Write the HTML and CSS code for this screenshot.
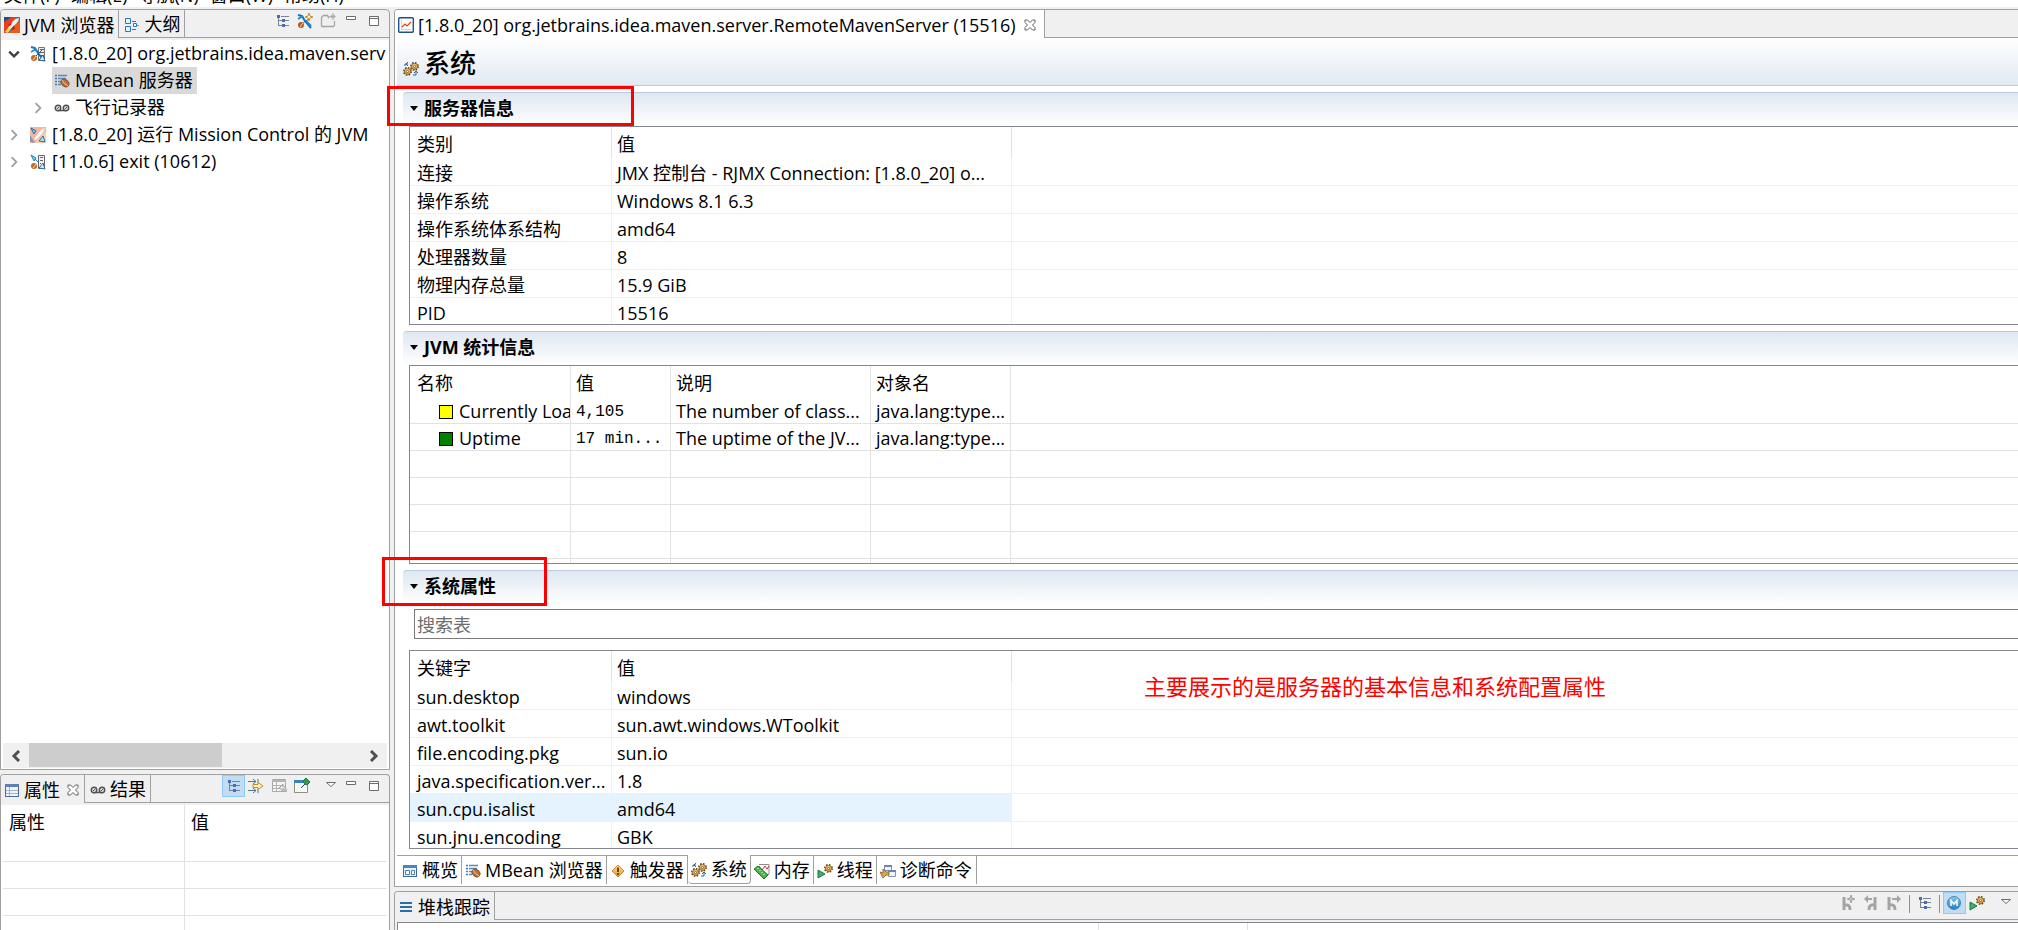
FILE: index.html
```html
<!DOCTYPE html>
<html lang="zh-CN">
<head>
<meta charset="utf-8">
<title>Mission Control</title>
<link rel="stylesheet" href="styles.css">
</head>
<body>
<svg class="sprite" aria-hidden="true">
  <linearGradient id="gold" x1="0" y1="0" x2="0" y2="1"><stop offset="0" stop-color="#ffe08a"/><stop offset="1" stop-color="#e09a28"/></linearGradient>
  <linearGradient id="sky" x1="0" y1="0" x2="0" y2="1"><stop offset="0" stop-color="#8cc8f0"/><stop offset="1" stop-color="#1f7fc4"/></linearGradient>
  <symbol id="rocket" viewBox="0 0 16 16">
    <rect width="16" height="16" rx="1" fill="#2a6cb0"/>
    <path d="M0 4L9 0H13L3 16H0z" fill="#e8401c"/><path d="M5 16L16 2V16z" fill="#e85a1c"/><path d="M1 15L7 7L9 9L4 16z" fill="#ffd23c"/><path d="M0 0h7L0 5z" fill="#1d4f8e"/>
    <path d="M4 11L9 4Q12 1 15 1Q15 4 12 7L6 12z" fill="#f2eee8"/><path d="M4 8L8 6L6 9zM7 13L10 9L11 12z" fill="#b81c10"/>
  </symbol>
  <symbol id="outline" viewBox="0 0 16 16">
    <path d="M1.500 1.500h5v5h-5zM1.500 9.500h5v5h-5z" fill="#e4f2fc" stroke="#2a78b4"/>
    <path d="M8 4.500h4M8 12.500h4" stroke="#2a78b4"/><path d="M9.500 6.500h3v3h-3z" fill="#fff" stroke="#2a78b4"/><path d="M13 8.500h2" stroke="#58a0d0"/>
  </symbol>
  <symbol id="tree" viewBox="0 0 16 16">
    <path d="M4.500 3v10M5 7.500h3M5 12.500h3M7 3.500h8M11 7.500h4M11 12.500h4" stroke="#788496" fill="none"/>
    <path d="M3 2h3v3h-3zM8 6h3v3h-3zM8 11h3v3h-3z" fill="#4670b0"/>
  </symbol>
  <symbol id="plug" viewBox="0 0 16 16">
    <path d="M8.500 1.500h6v13h-6z" fill="#eceef0" stroke="#70777e"/><path d="M10 3.500h4M10 6.500h4M10 9.500h4" stroke="#5c646c"/>
    <path d="M1 1l4 1 3 5 6 8" stroke="#1b70b4" stroke-width="2" fill="none"/><path d="M1 6l5-3M3 1l4 5" stroke="#2088c8" stroke-width="1.500"/>
    <circle cx="4" cy="12" r="3" fill="#c26a24"/><path d="M3 14l3-4" stroke="#ffd8a0"/><path d="M6 10L13 3M9 14l4-5 2 6z" stroke="#2a5f94" fill="#d8ecfa"/>
  </symbol>
  <symbol id="plugx" viewBox="0 0 16 16">
    <path d="M8.500 1.500h6v13h-6z" fill="#f4f4f4" stroke="#5c646c"/><path d="M10 3.500h3M10 6.500h3M10 9.500h1" stroke="#5c646c"/>
    <path d="M1 1l5 3-2 3zM5 5l3 3" stroke="#1b80c0" fill="#90d0f0"/><circle cx="4" cy="12" r="3" fill="#c26a24"/><path d="M3 14l3-4" stroke="#ffd8a0"/>
    <path d="M9 14l4-5 2 6z" stroke="#2a6fa8" fill="#d8ecfa"/>
  </symbol>
  <symbol id="plugr" viewBox="0 0 16 16">
    <rect width="16" height="16" fill="#f0b8a4"/><path d="M5 16L16 4V16z" fill="#f6d0a8"/><path d="M4 12L10 4Q12 2 15 1L12 7L6 13z" fill="#faf4f0"/>
    <path d="M1 1l5 3-2 3z" stroke="#1b70b4" fill="#90c8f0"/><path d="M9 14l4-5 2 6z" stroke="#2a6fa8" fill="#b8dcf4"/><path d="M0 15V8l5 8z" fill="#8898b4"/>
  </symbol>
  <symbol id="newconn" viewBox="0 0 16 16">
    <path d="M1 2l4 1 3 5 6 7" stroke="#1b70b4" stroke-width="2" fill="none"/><path d="M1 6l5-3M9 8l5 5" stroke="#2088c8" stroke-width="2"/>
    <circle cx="4" cy="12" r="3" fill="#b85a20"/><path d="M3 14l3-4" stroke="#ffd8a0"/><path d="M6 10L13 5" stroke="#3a6f98"/><path d="M12 0l1 3 3 1-3 1-1 3-1-3-3-1 3-1z" fill="#fff0b0" stroke="#c89030"/>
  </symbol>
  <symbol id="newfolder" viewBox="0 0 16 16">
    <path d="M1.500 13.500v-9l2-2h4l1 2h1M14.500 8v4l-1 1.500h-12" fill="none" stroke="#a4a4a4" stroke-width="1.300"/><path d="M13 0v7M9.500 3.500h6M11 2l4 3M11 5l4-3" stroke="#a8a8a8"/>
  </symbol>
  <symbol id="mbean" viewBox="0 0 16 16">
    <path d="M1 2.500h2M1 5.500h2M1 8.500h2M1 11.500h2" stroke="#3a78b8" stroke-width="1.500"/><path d="M4 2.500h9M4 5.500h8M4 8.500h3M4 11.500h3" stroke="#5c88b8" stroke-width="1.500"/>
    <ellipse cx="11" cy="10" rx="4.500" ry="3.500" transform="rotate(40 11 10)" fill="#b8703c" stroke="#7a4420" stroke-width=".7"/><path d="M8 7q2 4 6 6" stroke="#f4d0a0" fill="none"/>
  </symbol>
  <symbol id="tape" viewBox="0 0 16 16">
    <path d="M4 10.500h8" stroke="#505050" stroke-width="1.500"/><circle cx="4" cy="8" r="2.700" fill="#e4e4e4" stroke="#505050" stroke-width="1.500"/><circle cx="12" cy="8" r="2.700" fill="#e4e4e4" stroke="#505050" stroke-width="1.500"/><path d="M3 9l2-2M11 9l2-2" stroke="#505050"/>
  </symbol>
  <symbol id="chart" viewBox="0 0 16 16">
    <rect x=".7" y=".7" width="14.600" height="14.600" rx="1" fill="#fff" stroke="#1c4f8c" stroke-width="1.400"/><path d="M3.500 2.500v10h10" stroke="#88a8c8" fill="none" stroke-dasharray="1 1"/><path d="M4 10l3-3 2 2 4-4" stroke="#e0401c" fill="none" stroke-width="1.200"/>
  </symbol>
  <symbol id="gear" viewBox="0 0 10 10">
    <circle cx="5" cy="5" r="4" fill="none" stroke="#6b4412" stroke-width="2" stroke-dasharray="1.700 1.450"/><circle cx="5" cy="5" r="3.300" fill="url(#gold)" stroke="#7c5014" stroke-width=".8"/><circle cx="5" cy="5" r="1.200" fill="#fff" stroke="#6b4412" stroke-width=".8"/>
  </symbol>
  <symbol id="gears" viewBox="0 0 16 16">
    <use href="#gear" x="7" y="1" width="9" height="9"/><use href="#gear" x="0" y="6" width="9" height="9"/>
    <path d="M2 5V3h3M5 1L3 3l2 2M10 14h3v-3M11 12l2-2 2 2" stroke="#2068a8" fill="none"/>
  </symbol>
  <symbol id="rungear" viewBox="0 0 16 16"><path d="M1 7l7 4-7 4z" fill="#3fae6c" stroke="#1c7c44"/><use href="#gear" x="7" y="1" width="9" height="9"/></symbol>
  <symbol id="table" viewBox="0 0 16 16">
    <rect x="1.500" y="2.500" width="13" height="12" fill="#eef4fb" stroke="#54678c"/><path d="M1 2h14v3H1z" fill="#5f7fb4"/><path d="M2 8.500h12M2 11.500h12M5.500 5v9" stroke="#a0b4cc"/>
  </symbol>
  <symbol id="filter" viewBox="0 0 16 16">
    <path d="M0 3.500h8M0 12.500h8M10 1v4M10 11v4M5 1l3 2.500L5 6M5 10l3 2.500L5 15" stroke="#4f7890" fill="none"/><path d="M5 6.500h5v-2l5 3.500-5 3.500v-2H5z" fill="#fff0c4" stroke="#c88a24"/>
  </symbol>
  <symbol id="restore" viewBox="0 0 16 16">
    <path d="M1.500 1.500h13v12h-13z" fill="#f4f4f4" stroke="#a8a8a8"/><path d="M1 2h14v2H1z" fill="#b4b4b4"/><path d="M2 7.500h8M2 10.500h6M5.500 4v9" stroke="#b4b4b4"/><path d="M8 10l4-4v2q4 1 3 6l-2-3h-1v2z" fill="#dcdcdc" stroke="#a0a0a0"/>
  </symbol>
  <symbol id="pin" viewBox="0 0 16 16">
    <path d="M.5 3.500h13v11H.5z" fill="#f0faff" stroke="#988c70"/><path d="M0 2h10v3H0z" fill="#3884c0"/><path d="M7 10l5-5" stroke="#404040"/><path d="M9 3l3-3 4 4-3 3-2-1z" fill="#2f9c4c" stroke="#1c7838"/>
  </symbol>
  <symbol id="caret" viewBox="0 0 16 16"><path d="M3.500 4.500h9L8 8.500z" fill="#fff" stroke="#6c6c6c"/></symbol>
  <symbol id="mini" viewBox="0 0 16 16"><path d="M3.500 3.500h9v3h-9z" fill="#fff" stroke="#6c6c6c"/></symbol>
  <symbol id="maxi" viewBox="0 0 16 16"><path d="M3.500 3.500h9v9h-9zM3 5.500h10" fill="#fff" stroke="#6c6c6c"/></symbol>
  <symbol id="close" viewBox="0 0 12 12"><path d="M1 1h2.500L6 3.500 8.500 1H11v2.500L8.500 6 11 8.500V11H8.500L6 8.500 3.500 11H1V8.500L3.500 6 1 3.500z" fill="#fff" stroke="#606060"/></symbol>
  <symbol id="overview" viewBox="0 0 16 16">
    <rect x="1.500" y="2.500" width="13" height="11" fill="#e6f2fb" stroke="#3b6a9c"/><path d="M1 2h14v3H1z" fill="#4a86bc"/><path d="M3.500 7.500h4v4h-4zM9.500 7.500h3v4h-3z" fill="#fff" stroke="#4a7fb0"/>
  </symbol>
  <symbol id="trigger" viewBox="0 0 16 16"><path d="M8 2l6 6-6 6-6-6z" fill="url(#gold)" stroke="#cc8a2c"/><path d="M8 4.500v4.500M8 10v2" stroke="#4c2c08" stroke-width="1.600"/></symbol>
  <symbol id="memory" viewBox="0 0 16 16">
    <path d="M5 1.500h10v10H9" fill="#fff" stroke="#909090"/><path d="M5 3l3 4 3-4 2 3 2-3" stroke="#c83030" fill="none"/><path d="M0 6l4-3 10 9-4 4z" fill="#4cae4c" stroke="#207c30"/><path d="M3 6l2-1M5 8l2-1M7 10l2-1M9 12l2-1" stroke="#b8e8a8"/>
  </symbol>
  <symbol id="diag" viewBox="0 0 16 16">
    <path d="M4.500 2.500h7v5h-7zM8.500 7.500h7v6h-7z" fill="#f0f4fc" stroke="#8094bc"/><path d="M4 3h8M8 8h8" stroke="#6c84b4" stroke-width="2"/><path d="M0 9l3 1V6l3 3h3v3H6l-3 3z" fill="#d4aa58" stroke="#947030"/>
  </symbol>
  <symbol id="stack" viewBox="0 0 16 16"><path d="M2 4h12M2 8h12M2 12h12" stroke="#2f6ca4" stroke-width="2"/></symbol>
  <symbol id="branch" viewBox="0 0 16 16"><path d="M4 2v13M5 10h2q3 0 3 5" stroke="#a4a4a4" stroke-width="3" fill="none"/><path d="M11 0l1 3 3 1-3 1-1 3-1-3-3-1 3-1z" fill="#c0c0c0" stroke="#a4a4a4"/></symbol>
  <symbol id="branchl" viewBox="0 0 16 16"><path d="M12 2v13M11 10h-2q-3 0-3 5" stroke="#a4a4a4" stroke-width="3" fill="none"/><path d="M4 4h5" stroke="#a4a4a4" stroke-width="2"/><path d="M1 4l4-4v8z" fill="#a4a4a4"/></symbol>
  <symbol id="branchr" viewBox="0 0 16 16"><path d="M3 2v13M4 10h2q3 0 3 5" stroke="#a4a4a4" stroke-width="3" fill="none"/><path d="M6 4h6" stroke="#a4a4a4" stroke-width="2"/><path d="M15 4l-4-4v8z" fill="#a4a4a4"/></symbol>
  <symbol id="method" viewBox="0 0 16 16"><circle cx="8" cy="8" r="6.500" fill="url(#sky)" stroke="#4a86b4"/><path d="M5 11V5.500l3 3.500 3-3.500V11" stroke="#fff" stroke-width="1.500" fill="none"/></symbol>
  <symbol id="right" viewBox="0 0 10 10"><path d="M3 1l4 4-4 4" fill="none" stroke="currentColor" stroke-width="1.500"/></symbol>
  <symbol id="down" viewBox="0 0 10 10"><path d="M1 3l4 4 4-4" fill="none" stroke="currentColor" stroke-width="2"/></symbol>
</svg>

<nav class="menubar"><span>文件(F)</span><span>编辑(E)</span><span>导航(N)</span><span>窗口(W)</span><span>帮助(H)</span></nav>

<div class="workbench">
  <div class="side">
    <section class="view browser">
      <header class="tabbar">
        <button class="tab on"><svg class="i16"><use href="#rocket"/></svg>JVM 浏览器</button>
        <button class="tab"><svg class="i16"><use href="#outline"/></svg>大纲</button>
        <div class="tools">
          <button aria-label="树布局"><svg class="i16"><use href="#tree"/></svg></button>
          <button aria-label="新建连接"><svg class="i16"><use href="#newconn"/></svg></button>
          <button aria-label="新建文件夹"><svg class="i16"><use href="#newfolder"/></svg></button>
          <button aria-label="最小化"><svg class="i16"><use href="#mini"/></svg></button>
          <button aria-label="最大化"><svg class="i16"><use href="#maxi"/></svg></button>
        </div>
      </header>
      <ul class="tree">
        <li class="row"><svg class="tw open"><use href="#down"/></svg><svg class="i16"><use href="#plug"/></svg><span>[1.8.0_20] org.jetbrains.idea.maven.serv</span></li>
        <li class="row child"><span class="tw"></span><span class="picked"><svg class="i16"><use href="#mbean"/></svg>MBean 服务器</span></li>
        <li class="row child"><svg class="tw"><use href="#right"/></svg><span class="leaf"><svg class="i16"><use href="#tape"/></svg>飞行记录器</span></li>
        <li class="row"><svg class="tw"><use href="#right"/></svg><svg class="i16"><use href="#plugr"/></svg><span>[1.8.0_20] 运行 Mission Control 的 JVM</span></li>
        <li class="row"><svg class="tw"><use href="#right"/></svg><svg class="i16"><use href="#plugx"/></svg><span>[11.0.6] exit (10612)</span></li>
      </ul>
      <div class="hscroll">
        <button aria-label="向左滚动"><svg viewBox="0 0 10 12"><path d="M8 1L3 6l5 5" fill="none" stroke="#505050" stroke-width="3"/></svg></button>
        <div class="track"><div class="thumb"></div></div>
        <button aria-label="向右滚动"><svg viewBox="0 0 10 12"><path d="M2 1l5 5-5 5" fill="none" stroke="#505050" stroke-width="3"/></svg></button>
      </div>
    </section>

    <section class="view props">
      <header class="tabbar">
        <button class="tab on"><svg class="i16"><use href="#table"/></svg>属性<svg class="x"><use href="#close"/></svg></button>
        <button class="tab"><svg class="i16"><use href="#tape"/></svg>结果</button>
        <div class="tools">
          <button class="pressed" aria-label="显示类别"><svg class="i16"><use href="#tree"/></svg></button>
          <button aria-label="高级属性"><svg class="i16"><use href="#filter"/></svg></button>
          <button aria-label="恢复默认值"><svg class="i16"><use href="#restore"/></svg></button>
          <button aria-label="固定"><svg class="i16"><use href="#pin"/></svg></button>
          <button class="gap" aria-label="菜单"><svg class="i16"><use href="#caret"/></svg></button>
          <button class="tight" aria-label="最小化"><svg class="i16"><use href="#mini"/></svg></button>
          <button aria-label="最大化"><svg class="i16"><use href="#maxi"/></svg></button>
        </div>
      </header>
      <div class="prop-body">
        <table class="grid lined prop-grid">
          <colgroup><col class="w-prop"><col></colgroup>
          <thead><tr><th>属性</th><th>值</th></tr></thead>
          <tbody><tr><td></td><td></td></tr><tr><td></td><td></td></tr><tr><td></td><td></td></tr><tr><td></td><td></td></tr></tbody>
        </table>
      </div>
    </section>
  </div>

  <main class="center">
    <section class="editor">
      <header class="tabbar">
        <button class="tab on"><svg class="i16"><use href="#chart"/></svg>[1.8.0_20] org.jetbrains.idea.maven.server.RemoteMavenServer (15516)<svg class="x"><use href="#close"/></svg></button>
      </header>
      <div class="form-title"><svg class="i16"><use href="#gears"/></svg><h1>系统</h1></div>
      <div class="form">
        <h2 class="sec"><span class="arrow"></span>服务器信息</h2>
        <div class="box">
          <table class="grid">
            <colgroup><col class="w-key"><col class="w-val"><col></colgroup>
            <thead><tr><th>类别</th><th>值</th><th></th></tr></thead>
            <tbody>
              <tr><td>连接</td><td>JMX 控制台 - RJMX Connection: [1.8.0_20] o...</td><td></td></tr>
              <tr><td>操作系统</td><td>Windows 8.1 6.3</td><td></td></tr>
              <tr><td>操作系统体系结构</td><td>amd64</td><td></td></tr>
              <tr><td>处理器数量</td><td>8</td><td></td></tr>
              <tr><td>物理内存总量</td><td>15.9 GiB</td><td></td></tr>
              <tr><td>PID</td><td>15516</td><td></td></tr>
            </tbody>
          </table>
        </div>
        <h2 class="sec next"><span class="arrow"></span>JVM 统计信息</h2>
        <div class="box">
          <table class="grid lined">
            <colgroup><col class="w-name"><col class="w-num"><col class="w-desc"><col class="w-obj"><col></colgroup>
            <thead><tr><th>名称</th><th>值</th><th>说明</th><th>对象名</th><th></th></tr></thead>
            <tbody>
              <tr><td class="name"><i class="sw yellow"></i>Currently Loa</td><td class="mono">4,105</td><td>The number of class...</td><td>java.lang:type...</td><td></td></tr>
              <tr><td class="name"><i class="sw green"></i>Uptime</td><td class="mono">17 min...</td><td>The uptime of the JV...</td><td>java.lang:type...</td><td></td></tr>
              <tr><td></td><td></td><td></td><td></td><td></td></tr>
              <tr><td></td><td></td><td></td><td></td><td></td></tr>
              <tr><td></td><td></td><td></td><td></td><td></td></tr>
              <tr><td></td><td></td><td></td><td></td><td></td></tr>
              <tr><td></td><td></td><td></td><td></td><td></td></tr>
            </tbody>
          </table>
        </div>
        <h2 class="sec next"><span class="arrow"></span>系统属性</h2>
        <input class="search" type="text" placeholder="搜索表" aria-label="搜索表">
        <div class="box">
          <table class="grid">
            <colgroup><col class="w-key"><col class="w-val"><col></colgroup>
            <thead><tr><th>关键字</th><th>值</th><th></th></tr></thead>
            <tbody>
              <tr><td>sun.desktop</td><td>windows</td><td></td></tr>
              <tr><td>awt.toolkit</td><td>sun.awt.windows.WToolkit</td><td></td></tr>
              <tr><td>file.encoding.pkg</td><td>sun.io</td><td></td></tr>
              <tr><td>java.specification.ver...</td><td>1.8</td><td></td></tr>
              <tr class="hover"><td>sun.cpu.isalist</td><td>amd64</td><td></td></tr>
              <tr><td>sun.jnu.encoding</td><td>GBK</td><td></td></tr>
            </tbody>
          </table>
        </div>
      </div>
      <nav class="pages">
        <button><svg class="i16"><use href="#overview"/></svg>概览</button>
        <button><svg class="i16"><use href="#mbean"/></svg>MBean 浏览器</button>
        <button><svg class="i16"><use href="#trigger"/></svg>触发器</button>
        <button class="on"><svg class="i16"><use href="#gears"/></svg>系统</button>
        <button><svg class="i16"><use href="#memory"/></svg>内存</button>
        <button><svg class="i16"><use href="#rungear"/></svg>线程</button>
        <button><svg class="i16"><use href="#diag"/></svg>诊断命令</button>
      </nav>
    </section>

    <section class="trace">
      <header class="tabbar">
        <button class="tab on"><svg class="i16"><use href="#stack"/></svg>堆栈跟踪</button>
        <div class="tools">
          <button aria-label="分支"><svg class="i16"><use href="#branch"/></svg></button>
          <button aria-label="上一个分支"><svg class="i16"><use href="#branchl"/></svg></button>
          <button aria-label="下一个分支"><svg class="i16"><use href="#branchr"/></svg></button>
          <span class="bar"></span>
          <button aria-label="树布局"><svg class="i16"><use href="#tree"/></svg></button>
          <span class="bar"></span>
          <button class="pressed" aria-label="方法"><svg class="i16"><use href="#method"/></svg></button>
          <button aria-label="线程"><svg class="i16"><use href="#rungear"/></svg></button>
          <button class="gap" aria-label="菜单"><svg class="i16"><use href="#caret"/></svg></button>
        </div>
      </header>
      <div class="trace-body"><span class="c1"></span><span class="c2"></span></div>
    </section>
  </main>
</div>

<div class="mark mark-info"></div>
<div class="mark mark-props"></div>
<p class="note">主要展示的是服务器的基本信息和系统配置属性</p>
</body>
</html>
```

FILE: styles.css
```css
* { box-sizing: border-box; }

body {
  margin: 0;
  height: 100vh;
  display: flex;
  flex-direction: column;
  overflow: hidden;
  position: relative;
  background: #f0f0f0;
  color: #000;
  font: 18px/27px "Open Sans", "Noto Sans CJK SC", sans-serif;
}

button {
  font: inherit;
  color: inherit;
  background: none;
  border: 0;
  padding: 0;
  white-space: nowrap;
}

svg { flex: none; display: block; }
.sprite { position: absolute; width: 0; height: 0; }
.i16 { width: 16px; height: 16px; }
.x { width: 12px; height: 12px; }

.menubar {
  flex: none;
  height: 7px;
  display: flex;
  align-items: flex-end;
  gap: 11px;
  padding-left: 4px;
  overflow: hidden;
  background: #fff;
}
.menubar span { margin-bottom: -2px; }

.workbench {
  flex: 1;
  min-height: 0;
  display: flex;
  gap: 4px;
  padding-top: 2px;
}

.side {
  flex: none;
  width: 390px;
  display: flex;
  flex-direction: column;
  gap: 4px;
}
.view {
  border: 1px solid #a0a0a0;
  border-radius: 4px 4px 0 0;
  display: flex;
  flex-direction: column;
  overflow: hidden;
}
.browser { flex: 1; min-height: 0; }
.props { flex: none; height: 156px; border-bottom: 0; }

.tabbar {
  flex: none;
  height: 28px;
  display: flex;
  border-bottom: 1px solid #a0a0a0;
}
.tab {
  display: flex;
  align-items: center;
  gap: 4px;
  padding: 2px 4px 0 5px;
  border-right: 1px solid #a0a0a0;
}
.tab.on {
  height: 28px;
  padding-left: 3px;
  background: #f0f0f0;
}
.tab .x { margin: 0 4px; }
.props .tab .x { margin: 0 1px 0 3px; }

.tools {
  margin-left: auto;
  display: flex;
  align-items: flex-start;
  padding-right: 3px;
}
.tools button {
  width: 23px;
  height: 22px;
  padding: 3px 3px;
}
.tools .pressed {
  padding: 2px;
  border: 1px solid #90c8f6;
  background: #c2dcf3;
}
.tools .gap { margin-left: 6px; }
.tools .tight { margin-left: -3px; }
.tools .bar {
  width: 1px;
  height: 18px;
  margin: 3px 3px;
  background: #909090;
}

.tree {
  flex: 1;
  min-height: 0;
  margin: 2px 0 0;
  padding: 0;
  list-style: none;
  background: #fff;
}
.row {
  height: 27px;
  display: flex;
  align-items: center;
  gap: 6px;
  margin-right: 2px;
  padding-left: 7px;
  white-space: nowrap;
  overflow: hidden;
}
.row.child { padding-left: 31px; }
.row.child .tw { margin-right: 4px; }
.tw {
  flex: none;
  width: 12px;
  height: 12px;
  margin-right: 4px;
  color: #a0a0a0;
}
.tw.open { color: #404040; }
.picked, .leaf {
  display: flex;
  align-items: center;
  gap: 5px;
  margin-left: -2px;
  padding: 0 4px 0 2px;
}
.picked { background: #d9d9d9; }

.hscroll {
  flex: none;
  height: 27px;
  display: flex;
  align-items: center;
  padding: 0 2px;
  background: #fff;
}
.hscroll button {
  width: 26px;
  height: 25px;
  padding: 6px 8px;
  background: #f0f0f0;
}
.hscroll button svg { width: 10px; height: 12px; }
.track { flex: 1; height: 25px; background: #f0f0f0; }
.thumb { width: 58%; height: 24px; background: #cdcdcd; }

.prop-body {
  flex: 1;
  margin-top: 2px;
  overflow: hidden;
  padding: 0 2px;
  background: #fff;
}

.grid {
  width: 100%;
  table-layout: fixed;
  border-collapse: separate;
  border-spacing: 0;
}
.grid th, .grid td {
  height: 28px;
  padding: 3px 0 0 5px;
  border-right: 1px solid #f0f0f0;
  border-bottom: 1px solid #f0f0f0;
  line-height: 24px;
  font-weight: 400;
  text-align: left;
  white-space: nowrap;
  overflow: hidden;
}
.grid th {
  height: 31px;
  line-height: 27px;
  border-bottom: 0;
  border-right-color: #e2e2e2;
}
.grid th:first-child, .grid td:first-child { padding-left: 7px; }
.grid th:last-child, .grid td:last-child { border-right: 0; }
.lined td { height: 27px; padding-top: 2px; border-color: #e2e2e2; }
.grid td.name { padding-left: 29px; }
.grid td.mono {
  padding-top: 4px;
  font-family: "Liberation Mono", monospace;
  font-size: 16px;
  line-height: 22px;
}
.prop-grid tbody tr:first-child td { height: 26px; }
.grid.prop-grid th:first-child { padding-left: 6px; }
.grid.prop-grid th:last-child { padding-left: 6px; }
.hover td { background: #e5f3ff; }
.hover td:last-child { background: none; }

.w-key { width: 202px; }
.w-val { width: 400px; }
.w-name { width: 161px; }
.w-num { width: 100px; }
.w-desc { width: 200px; }
.w-obj { width: 140px; }
.w-prop { width: 182px; }

.sw {
  display: inline-block;
  width: 14px;
  height: 14px;
  margin-right: 6px;
  border: 1px solid #000;
  vertical-align: -1px;
}
.yellow { background: #ff0; }
.green { background: #008000; }

.center {
  flex: 1;
  min-width: 0;
  display: flex;
  flex-direction: column;
  gap: 4px;
}
.editor {
  flex: 1;
  min-height: 0;
  display: flex;
  flex-direction: column;
  border: 1px solid #a0a0a0;
  border-right: 0;
  border-radius: 4px 0 0 0;
  background: #fff;
  overflow: hidden;
}
.editor .tabbar { background: #f0f0f0; }
.editor .tab.on { background: #fff; }

.form-title {
  flex: none;
  height: 48px;
  display: flex;
  align-items: center;
  gap: 5px;
  margin-left: 2px;
  padding: 2px 0 0 6px;
  border-bottom: 1px solid #b8cbe0;
  background: linear-gradient(#fff, #e1e9f2);
}
.form-title .i16 { margin-top: 12px; }
h1 { margin: 0; font-size: 26px; font-weight: 500; line-height: 40px; }

.form {
  flex: 1;
  min-height: 0;
  display: flex;
  flex-direction: column;
  padding: 6px 0 6px 8px;
}
.sec {
  flex: none;
  height: 34px;
  margin: 0;
  display: flex;
  align-items: center;
  gap: 6px;
  padding: 0 0 2px 7px;
  border: 1px solid #b8cbe0;
  border-width: 1px 0 0;
  border-radius: 4px 0 0 0;
  background: linear-gradient(#dfe7f1, #fff);
  font-size: 18px;
  font-weight: 700;
}
.sec.next { margin-top: 6px; }
.arrow {
  border: 4px solid transparent;
  border-top: 5px solid #000;
  border-bottom: 0;
}
.box {
  flex: 1 1 0;
  min-height: 0;
  margin-left: 6px;
  overflow: hidden;
  border: 1px solid #828790;
  border-right: 0;
}
.search {
  flex: none;
  height: 30px;
  margin: 5px 0 11px 11px;
  padding: 1px 2px 0;
  border: 1px solid #7a7a7a;
  border-right: 0;
  border-radius: 0;
  background: #fff;
  font: inherit;
}
.search::placeholder { color: #6d6d6d; opacity: 1; }

.pages {
  flex: none;
  height: 31px;
  display: flex;
  align-items: flex-start;
  margin-left: 2px;
  border-top: 1px solid #a0a0a0;
}
.pages button {
  height: 28px;
  display: flex;
  align-items: center;
  gap: 4px;
  padding: 1px 3px 0;
  border-right: 1px solid #a0a0a0;
}
.pages button:first-child { padding-left: 5px; }
.pages .on {
  height: 29px;
  margin-top: -1px;
  padding-left: 3px;
  border: 1px solid #a0a0a0;
  border-width: 0 1px 1px 0;
  border-radius: 0 0 4px 4px;
  background: #fff;
}
.pages button:last-child { padding-right: 4px; }

.trace {
  flex: none;
  height: 39px;
  display: flex;
  flex-direction: column;
  border: 1px solid #a0a0a0;
  border-width: 1px 0 0 1px;
  border-radius: 4px 0 0 0;
  overflow: hidden;
}
.trace .tools { padding-right: 0; }
.trace-body {
  flex: 1;
  display: flex;
  margin: 2px 0 0 2px;
  border: 1px solid #828790;
  border-width: 1px 0 0 1px;
  background: #fff;
}
.c1, .c2 { border-right: 1px solid #e2e2e2; }
.c1 { width: 701px; }
.c2 { width: 149px; }

.mark { position: absolute; border: 3px solid #f00; }
.mark-info { left: 387px; top: 86px; width: 247px; height: 40px; }
.mark-props { left: 382px; top: 557px; width: 165px; height: 49px; }
.note {
  position: absolute;
  left: 1144px;
  top: 670px;
  margin: 0;
  color: #f00;
  font-size: 22px;
  line-height: 32px;
}
```
